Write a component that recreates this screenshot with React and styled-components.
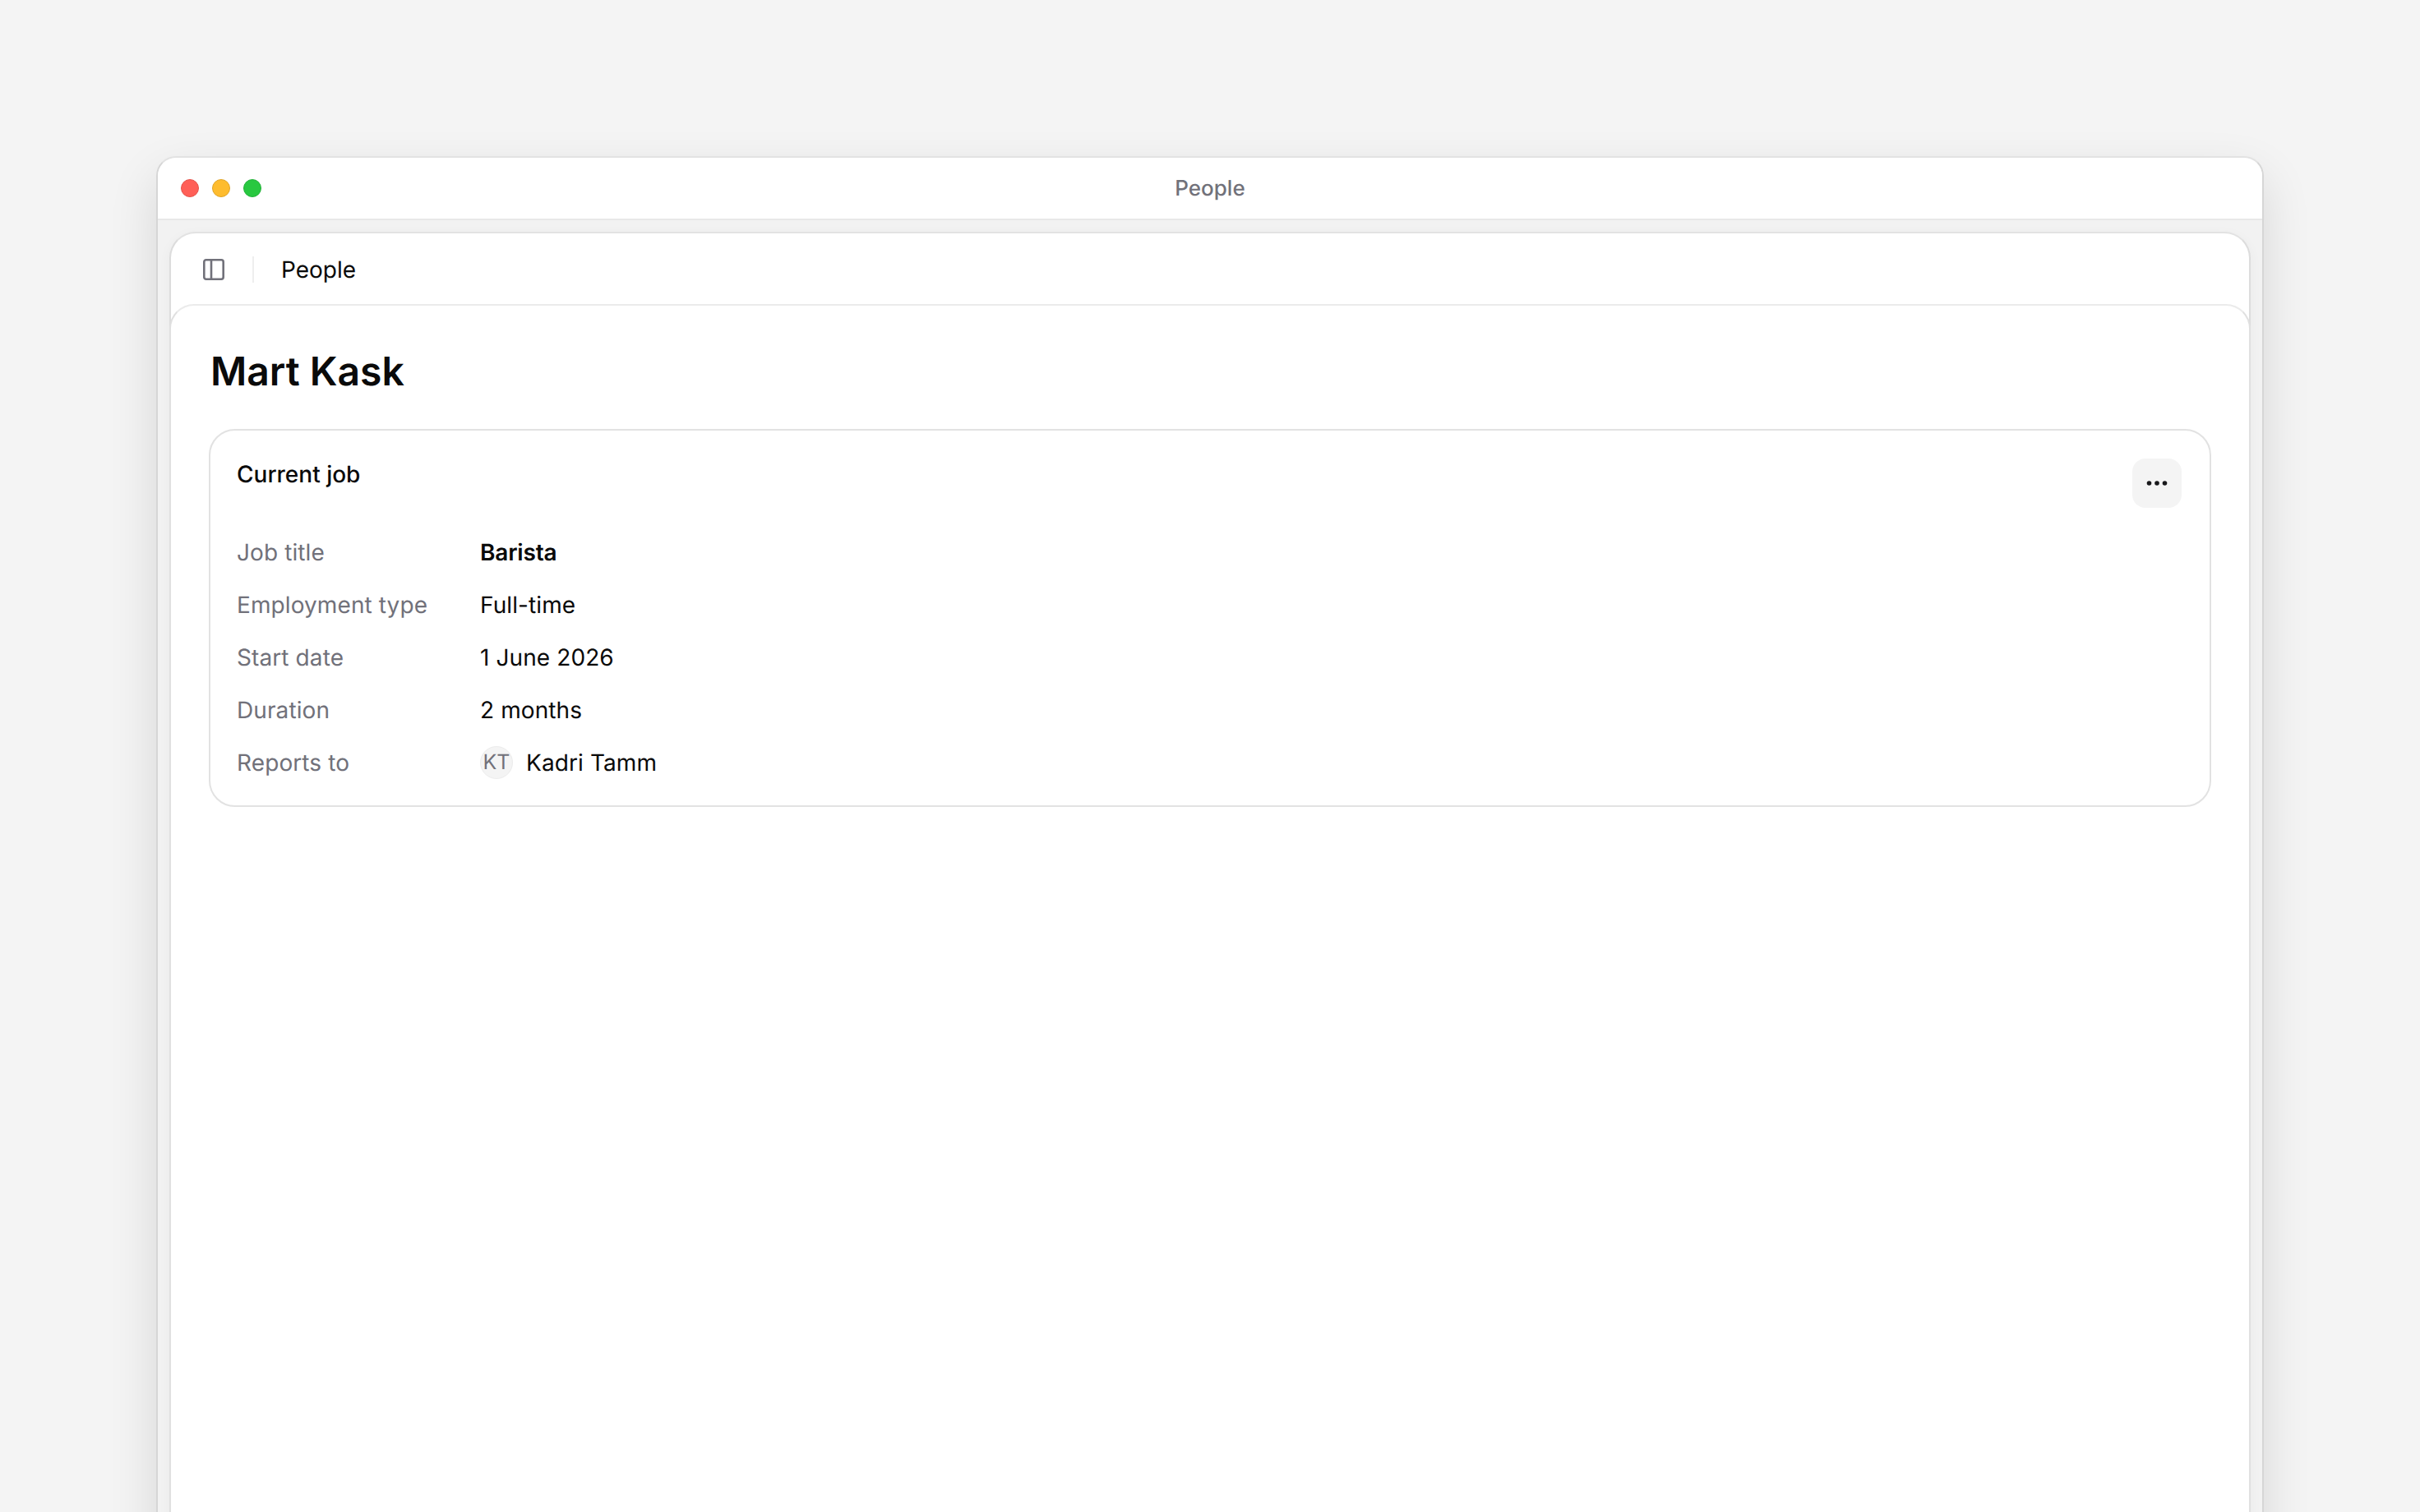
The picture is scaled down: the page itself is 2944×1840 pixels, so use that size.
import React from "react";
import styled, { createGlobalStyle } from "styled-components";

const GlobalStyle = createGlobalStyle`
  * {
    box-sizing: border-box;
  }

  html,
  body {
    margin: 0;
    height: 100%;
    overflow: hidden;
    background: #f4f4f4;
    font-family: Inter, "Liberation Sans", sans-serif;
    color: #0a0a0a;
    text-rendering: geometricPrecision;
  }
`;

const fields = [
  { label: "Job title", value: "Barista", strong: true },
  { label: "Employment type", value: "Full-time" },
  { label: "Start date", value: "1 June 2026" },
  { label: "Duration", value: "2 months" },
];

const SidebarIcon = () => (
  <svg width="30" height="30" viewBox="0 0 30 30" fill="none" stroke="#71717a" strokeWidth="2.6">
    <rect x="3.3" y="3.3" width="23.4" height="23.4" rx="2.4" />
    <path d="M12 3.3v23.4" />
  </svg>
);

const DotsIcon = () => (
  <svg width="28" height="8" viewBox="0 0 28 8" fill="#18181b">
    <circle cx="4.5" cy="4" r="2.8" />
    <circle cx="14" cy="4" r="2.8" />
    <circle cx="23.5" cy="4" r="2.8" />
  </svg>
);

const App = () => {
  return (
    <>
      <GlobalStyle />
      <Page>
        <Window>
          <TitleBar>
            <Lights>
              <Light color="#ff5f57" edge="#e5534b" />
              <Light color="#febc2e" edge="#e0a528" />
              <Light color="#28c840" edge="#24b23a" />
            </Lights>
            <WindowTitle>People</WindowTitle>
          </TitleBar>
          <Body>
            <Panel>
              <Toolbar>
                <SidebarIcon />
                <Divider />
                <Crumb>People</Crumb>
              </Toolbar>
              <Main>
                <Heading>Mart Kask</Heading>
                <Card>
                  <CardHeader>
                    <CardTitle>Current job</CardTitle>
                    <MoreButton aria-label="More">
                      <DotsIcon />
                    </MoreButton>
                  </CardHeader>
                  {fields.map((field) => (
                    <Row key={field.label}>
                      <Label>{field.label}</Label>
                      <Value $strong={field.strong}>{field.value}</Value>
                    </Row>
                  ))}
                  <Row>
                    <Label>Reports to</Label>
                    <Person>
                      <Avatar>KT</Avatar>
                      <Value>Kadri Tamm</Value>
                    </Person>
                  </Row>
                </Card>
              </Main>
            </Panel>
          </Body>
        </Window>
      </Page>
    </>
  );
};

export default App;

const Page = styled.div`
  height: 1840px;
  padding: 190px 190px 0;
  overflow: hidden;
`;

const Window = styled.div`
  height: 1800px;
  display: flex;
  flex-direction: column;
  background: #f2f2f2;
  border: 2px solid #d6d6d6;
  border-top-color: #e2e2e2;
  border-radius: 24px;
  box-shadow: 0 24px 60px rgba(0, 0, 0, 0.12);
`;

const TitleBar = styled.div`
  height: 76px;
  flex: none;
  display: grid;
  grid-template-columns: 1fr auto 1fr;
  align-items: center;
  padding: 0 28px;
  background: #fff;
  border-bottom: 2px solid #e8e8e8;
  border-radius: 22px 22px 0 0;
`;

const Lights = styled.div`
  display: flex;
  gap: 16px;
`;

const Light = styled.span`
  width: 22px;
  height: 22px;
  border-radius: 50%;
  background: ${(props) => props.color};
  border: 1px solid ${(props) => props.edge};
`;

const WindowTitle = styled.div`
  font-size: 26px;
  font-weight: 500;
  color: #71717a;
`;

const Body = styled.div`
  flex: 1;
  display: flex;
  padding: 14px 14px 0;
`;

const Panel = styled.div`
  flex: 1;
  display: flex;
  flex-direction: column;
  background: #fff;
  border: 2px solid #dcdcdc;
  border-top-color: #e2e2e2;
  border-radius: 32px;
  box-shadow: 0 4px 16px rgba(0, 0, 0, 0.04);
`;

const Toolbar = styled.div`
  height: 86px;
  flex: none;
  display: flex;
  align-items: center;
  padding: 2px 0 0 37px;
`;

const Divider = styled.span`
  width: 2px;
  height: 32px;
  margin: 0 33px 0 32px;
  background: #eeeeee;
`;

const Crumb = styled.span`
  font-size: 28px;
  font-weight: 400;
`;

const Main = styled.main`
  flex: 1;
  margin: 0 -2px;
  padding: 46px 46px 0;
  border: 2px solid #e0e0e0;
  border-top-color: #ebebeb;
  border-bottom: 0;
  border-radius: 30px 30px 0 0;
`;

const Heading = styled.h1`
  margin: 2px 0 38px 2px;
  font-size: 48px;
  line-height: 64px;
  font-weight: 600;
`;

const Card = styled.section`
  padding: 34px 34px 20px 32px;
  border: 2px solid #e2e2e2;
  border-radius: 32px;
`;

const CardHeader = styled.div`
  display: flex;
  justify-content: space-between;
  align-items: flex-start;
  margin-bottom: 22px;
`;

const CardTitle = styled.h2`
  margin: 0;
  font-size: 28px;
  line-height: 38px;
  font-weight: 500;
`;

const MoreButton = styled.button`
  width: 60px;
  height: 60px;
  display: flex;
  align-items: center;
  justify-content: center;
  padding: 0;
  border: 0;
  border-radius: 16px;
  background: #f4f4f4;
  cursor: pointer;
`;

const Row = styled.div`
  height: 64px;
  display: flex;
  align-items: center;
`;

const Label = styled.span`
  width: 296px;
  flex: none;
  font-size: 28px;
  letter-spacing: 0.1px;
  color: #71717a;
`;

const Value = styled.span`
  font-size: 28px;
  font-weight: ${(props) => (props.$strong ? 600 : 400)};
  letter-spacing: ${(props) => (props.$strong ? "-0.2px" : "0.1px")};
`;

const Person = styled.div`
  display: flex;
  align-items: center;
  gap: 16px;
`;

const Avatar = styled.span`
  width: 40px;
  height: 40px;
  display: flex;
  align-items: center;
  justify-content: center;
  border-radius: 50%;
  background: #f4f4f4;
  border: 1px solid #ececec;
  font-size: 25px;
  color: #71717a;
`;
